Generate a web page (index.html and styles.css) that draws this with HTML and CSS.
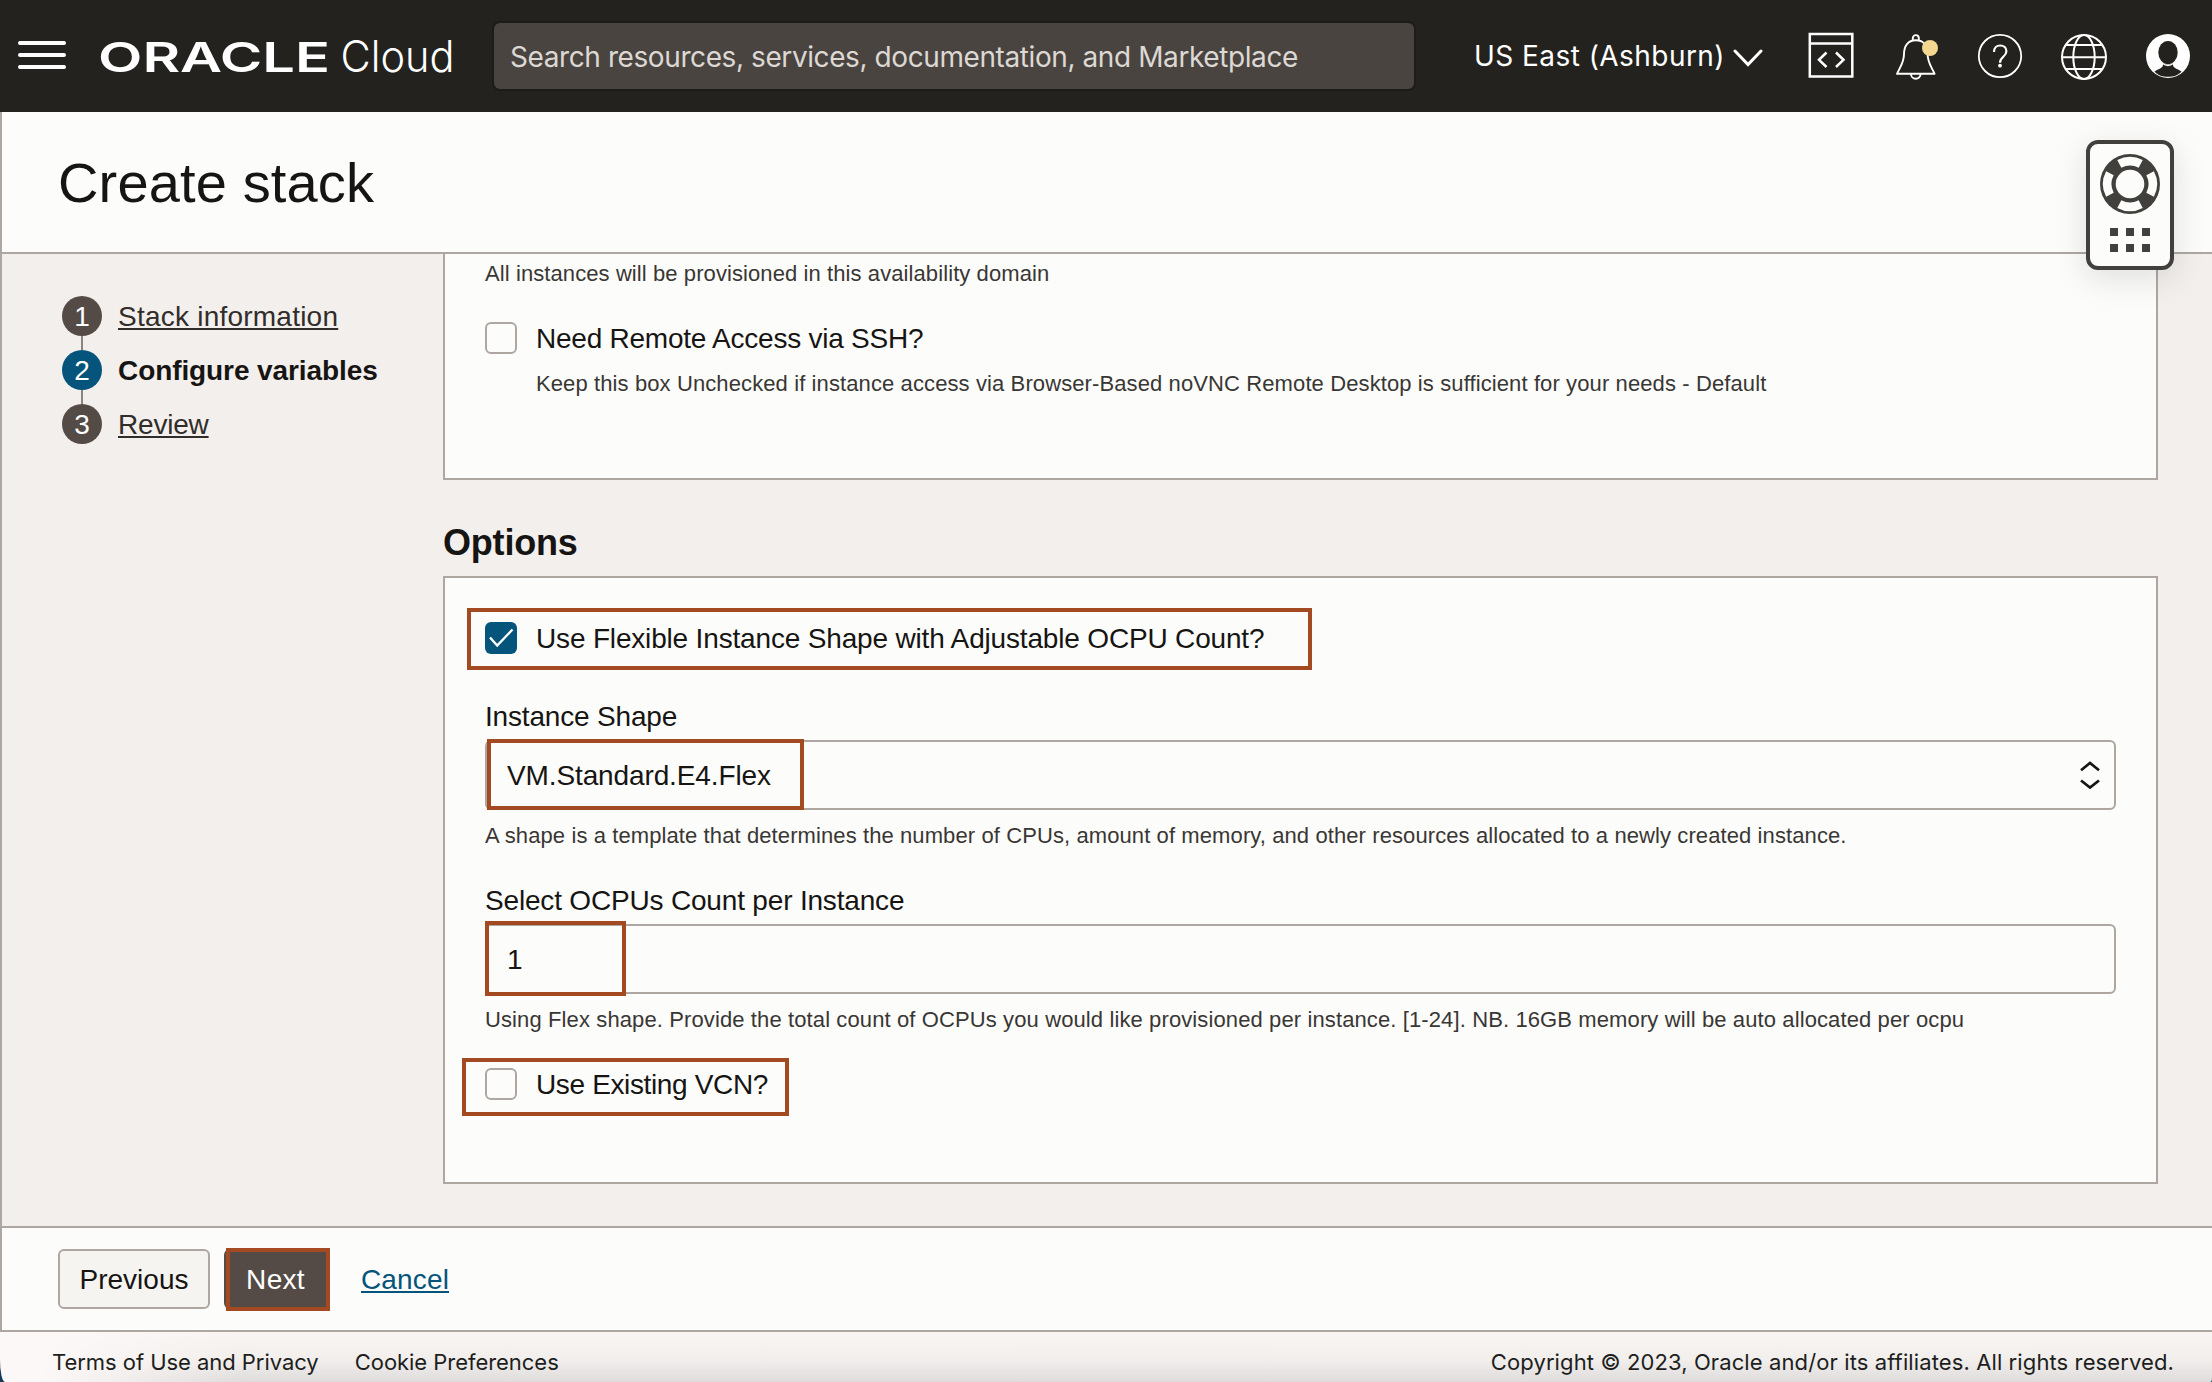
FILE: index.html
```
<!DOCTYPE html>
<html lang="en">
<head>
<meta charset="utf-8">
<title>Create stack</title>
<link rel="stylesheet" href="styles.css">
</head>
<body>
<div class="app">
  <header class="topbar">
    <button class="menu" aria-label="Menu"><span></span><span></span><span></span></button>
    <svg class="logo" width="356" height="40" viewBox="0 0 356 40" fill="#fff">
      <text class="logo-brand" x="0" y="35.500" textLength="232" lengthAdjust="spacingAndGlyphs">ORACLE</text>
      <text class="logo-product" x="242.500" y="35.500" textLength="114" lengthAdjust="spacingAndGlyphs">Cloud</text>
    </svg>
    <div class="search">Search resources, services, documentation, and Marketplace</div>
    <div class="region">US East (Ashburn)
      <svg width="30" height="18" viewBox="0 0 30 18" fill="none" stroke="#fff" stroke-width="3" stroke-linecap="round"><path d="M2 2l13 13.5L28 2"/></svg>
    </div>
    <nav class="tools">
      <svg width="48" height="48" viewBox="0 0 48 48" fill="none" stroke="#fff" stroke-width="2.5"><path d="M2.8 2h42.5v42.6H2.8zM2.8 11.4h42.5"/><path d="M19.5 20.5L12 27.8l7.5 7.2M29 20.5l7.5 7.3L29 35"/></svg>
      <svg width="48" height="48" viewBox="0 0 48 48" fill="none" stroke="#fff" stroke-width="1.9"><path d="M5 41.8h37.6c-3.7-8-7-11.500-7-19.500 0-8-3.500-14-11.800-14s-11.800 6-11.800 14c0 8-3.300 11.500-7 19.500z" stroke-linejoin="round"/><path d="M20.800 8.300V6.300a3 3.200 0 0 1 6 0v2M19 42a4.800 4.800 0 0 0 9.600 0"/><circle cx="38" cy="16" r="8" fill="#f5d78f" stroke="none"/></svg>
      <svg width="48" height="48" viewBox="0 0 48 48" fill="none" stroke="#fff" stroke-width="1.8"><circle cx="24" cy="24" r="21.200"/><path d="M18 20c0-4 2.500-6.500 6.200-6.500s6.200 2.400 6.200 5.700c0 5.600-6.400 5.600-6.400 11.600" stroke-width="2.200"/><circle cx="24" cy="33.700" r="1.900" fill="#fff" stroke="none"/></svg>
      <svg width="48" height="48" viewBox="0 0 48 48" fill="none" stroke="#fff" stroke-width="2"><circle cx="24" cy="25" r="22"/><ellipse cx="24" cy="25" rx="10.700" ry="22"/><path d="M2 25.300h44M6 13h36M6 37h36"/></svg>
      <svg width="48" height="48" viewBox="0 0 48 48"><circle cx="24" cy="24" r="22" fill="#fff"/><ellipse cx="24" cy="20.500" rx="9.700" ry="11.500" fill="#24221e"/><path d="M19 30.500v2.500c0 3-5 4-8.500 6.500 3.800 4 8 5.300 13.500 5.300s9.700-1.300 13.500-5.300C34 37 29 36 29 33v-2.500c-3 2.800-7 2.800-10 0z" fill="#24221e"/><path d="M18.800 31.600c3 2.500 7.400 2.500 10.400 0" fill="none" stroke="#fff" stroke-width="1.300"/></svg>
    </nav>
  </header>

  <div class="workspace">
    <div class="titlebar"><h1>Create stack</h1></div>
    <div class="content">
      <ol class="steps">
        <li class="step"><span class="dot">1</span><a class="step-link">Stack information</a></li>
        <li class="step current"><span class="dot">2</span><span class="step-name">Configure variables</span></li>
        <li class="step"><span class="dot">3</span><a class="step-link review">Review</a></li>
      </ol>
      <main class="form">
        <section class="panel first">
          <p class="hint">All instances will be provisioned in this availability domain</p>
          <div class="check ssh"><span class="box"></span><span class="check-label">Need Remote Access via SSH?</span></div>
          <p class="hint indented">Keep this box Unchecked if instance access via Browser-Based noVNC Remote Desktop is sufficient for your needs - Default</p>
        </section>
        <h2>Options</h2>
        <section class="panel second">
          <div class="check flexible">
            <span class="box checked"><svg width="32" height="32" viewBox="0 0 32 32" fill="none" stroke="#fff" stroke-width="2.400"><path d="M5 15.500l7.200 8L27.500 7.500"/></svg></span>
            <span class="check-label">Use Flexible Instance Shape with Adjustable OCPU Count?</span>
            <span class="mark mark-flexible"></span>
          </div>
          <div class="label shape-label">Instance Shape</div>
          <div class="field">
            <span class="value">VM.Standard.E4.Flex</span>
            <svg class="sorter" width="22" height="30" viewBox="0 0 22 30" fill="none" stroke="#161513" stroke-width="2.700"><path d="M2 10.200L11 3l9 7.200M2 20.500l9 7 9-7"/></svg>
            <span class="mark mark-shape"></span>
          </div>
          <p class="hint below shape-hint">A shape is a template that determines the number of CPUs, amount of memory, and other resources allocated to a newly created instance.</p>
          <div class="label count-label">Select OCPUs Count per Instance</div>
          <div class="field">
            <span class="value">1</span>
            <span class="mark mark-count"></span>
          </div>
          <p class="hint below count-hint">Using Flex shape. Provide the total count of OCPUs you would like provisioned per instance. [1-24]. NB. 16GB memory will be auto allocated per ocpu</p>
          <div class="check vcn">
            <span class="box"></span><span class="check-label">Use Existing VCN?</span>
            <span class="mark mark-vcn"></span>
          </div>
        </section>
      </main>
    </div>
    <div class="actions">
      <button class="btn">Previous</button>
      <button class="btn primary">Next<span class="mark mark-next"></span></button>
      <a class="cancel">Cancel</a>
    </div>
  </div>

  <footer class="footer">
    <span>Terms of Use and Privacy</span>
    <span>Cookie Preferences</span>
    <span class="copyright">Copyright © 2023, Oracle and/or its affiliates. All rights reserved.</span>
  </footer>

  <aside class="help">
    <svg width="60" height="60" viewBox="-30 -30 60 60">
      <circle r="30" fill="#41403c"/>
      <g fill="none" stroke="#fcfcfa" stroke-width="8.600">
        <path id="seg" d="M-10.700-20.100A22.800 22.800 0 0 1 10.700-20.100"/>
        <use href="#seg" transform="rotate(90)"/><use href="#seg" transform="rotate(180)"/><use href="#seg" transform="rotate(270)"/>
      </g>
      <circle r="14.300" fill="#fcfcfa"/>
    </svg>
    <div class="grid"><i></i><i></i><i></i><i></i><i></i><i></i></div>
  </aside>
</div>
</body>
</html>
```
FILE: styles.css
```
* { box-sizing: border-box; }

body {
  margin: 0;
  background: #123a5c;
  color: #161513;
  font: 28px/31px "Liberation Sans", Arial, sans-serif;
}
h1, h2, p, ol { margin: 0; padding: 0; font-weight: 400; list-style: none; }
button { font: inherit; color: inherit; padding: 0; }

.app {
  position: relative;
  width: 2212px;
  height: 1382px;
  display: flex;
  flex-direction: column;
  overflow: hidden;
}

/* Top bar */
.topbar {
  height: 112px;
  flex: none;
  display: flex;
  align-items: center;
  padding-left: 18px;
  background: #24221e;
  color: #fff;
  font-family: Inter, sans-serif;
  white-space: nowrap;
}
.menu {
  width: 48px;
  margin-top: -2px;
  display: flex;
  flex-direction: column;
  gap: 8px;
  border: 0;
  background: none;
}
.menu span { height: 4px; border-radius: 2px; background: #fff; }
.logo { margin-left: 32px; flex: none; overflow: visible; }
.logo-brand { font: 600 41px Inter, sans-serif; }
.logo-product { font: 300 43px Inter, sans-serif; }
.search {
  width: 920px;
  height: 66px;
  margin-left: 40px;
  padding: 17px 16px 0;
  border-radius: 6px;
  background: #4a4440;
  box-shadow: 0 0 0 2px #1e1c19;
  color: #dcd8d3;
  line-height: 34px;
  letter-spacing: -0.41px;
}
.region {
  margin-left: 60px;
  display: flex;
  align-items: center;
  gap: 8px;
  width: 289px;
  line-height: 34px;
  letter-spacing: 0.45px;
}
.region svg { margin-top: 3px; flex: none; }
.tools { margin-left: 44px; display: flex; gap: 36px; }
.tools svg:first-child { margin-right: 1px; }

/* Page frame */
.workspace {
  height: 1220px;
  flex: none;
  display: flex;
  flex-direction: column;
  border-left: 2px solid #aea7a1;
  border-bottom: 2px solid #aea7a1;
  background: #fcfcfa;
}
.titlebar {
  height: 142px;
  flex: none;
  padding: 39px 0 0 56px;
  border-bottom: 2px solid #aea7a1;
}
h1 { font-size: 56px; line-height: 63px; letter-spacing: 0.15px; }
.content {
  height: 972px;
  flex: none;
  display: flex;
  background: #f3efec;
}

/* Steps */
.steps { width: 441px; flex: none; padding: 42px 0 0 60px; }
.step {
  position: relative;
  height: 54px;
  display: flex;
  align-items: flex-start;
  gap: 16px;
}
.step:not(:last-child)::after {
  content: "";
  position: absolute;
  left: 19px;
  top: 40px;
  width: 2px;
  height: 14px;
  background: #8b8580;
}
.dot {
  width: 40px;
  height: 40px;
  border-radius: 50%;
  background: #544b47;
  color: #fff;
  text-align: center;
  line-height: 41px;
}
.current .dot { background: #05547c; }
.step-link, .step-name { margin-top: 5px; }
.step-link {
  color: #312d2a;
  letter-spacing: 0.23px;
  text-decoration: underline;
  text-decoration-thickness: 2px;
  text-underline-offset: 2px;
  text-decoration-skip-ink: none;
}
.step-link.review { letter-spacing: -0.2px; }
.step-name { font-weight: 700; letter-spacing: -0.09px; }

/* Form */
.form { width: 1715px; }
.panel {
  padding: 0 40px;
  border: 2px solid #aea7a1;
  background: #fcfcfa;
}
.first { height: 226px; padding-top: 7px; border-top: 0; }
.second { height: 608px; padding-top: 44px; }
h2 {
  margin: 42px 0 13px;
  font-size: 36px;
  font-weight: 700;
  line-height: 41px;
  letter-spacing: -0.2px;
}
.hint {
  color: #393734;
  font-size: 22px;
  line-height: 25px;
  letter-spacing: 0.09px;
  white-space: nowrap;
}
.hint.indented { margin: 17px 0 0 51px; letter-spacing: 0.107px; }
.hint.below { margin-top: 13px; }
.shape-hint { letter-spacing: 0.098px; }
.count-hint { letter-spacing: 0.113px; }
.check { position: relative; display: flex; gap: 19px; height: 32px; }
.box {
  width: 32px;
  height: 32px;
  border: 2px solid #aea7a1;
  border-radius: 6px;
}
.box.checked { border: 0; background: #05547c; }
.check-label { padding-top: 1px; }
.ssh { margin-top: 36px; }
.vcn { margin-top: 36px; }
.ssh .check-label { letter-spacing: -0.24px; }
.flexible .check-label { letter-spacing: -0.17px; }
.vcn .check-label { letter-spacing: -0.36px; }
.label { margin-bottom: 8px; letter-spacing: -0.18px; }
.shape-label { margin-top: 47px; }
.count-label { margin-top: 37px; }
.field {
  position: relative;
  width: 1631px;
  height: 70px;
  display: flex;
  align-items: center;
  justify-content: space-between;
  padding: 0 13px 0 20px;
  border: 2px solid #aea7a1;
  border-radius: 6px;
}
.value { letter-spacing: -0.12px; }

/* Highlight frames */
.mark { position: absolute; border: 4px solid #a44a22; }
.mark-flexible { left: -18px; top: -14px; width: 845px; height: 62px; }
.mark-shape { left: 0; top: -3px; width: 317px; height: 71px; }
.mark-count { left: -2px; top: -5px; width: 141px; height: 75px; }
.mark-vcn { left: -23px; top: -10px; width: 327px; height: 58px; }
.mark-next { left: 2px; top: -1px; width: 104px; height: 63px; }

/* Actions */
.actions {
  height: 104px;
  display: flex;
  align-items: flex-start;
  padding: 21px 0 0 56px;
  border-top: 2px solid #aea7a1;
}
.btn {
  position: relative;
  width: 152px;
  height: 60px;
  border: 2px solid #aea7a1;
  border-radius: 6px;
  background: #f5f4f1;
}
.btn.primary {
  width: 105px;
  margin-left: 14px;
  padding-right: 2px;
  border: 0;
  background: #544b47;
  color: #fff;
  letter-spacing: 0.3px;
}
.cancel {
  margin: 15px 0 0 32px;
  color: #05547c;
  letter-spacing: 0.15px;
  text-decoration: underline;
  text-decoration-thickness: 2px;
  text-underline-offset: 2px;
  text-decoration-skip-ink: none;
}

/* Footer */
.footer {
  flex: 1;
  display: flex;
  gap: 36px;
  padding: 17px 38px 0 52px;
  border-radius: 0 0 2px 5px / 0 0 4px 22px;
  background:
    linear-gradient(90deg, #fcf8f7 40px, rgba(252, 248, 247, 0) 240px),
    linear-gradient(#f9f5f3, #f1eeec 55%, #dfdddc);
  color: #201e1c;
  font: 22px/26px Inter, sans-serif;
  letter-spacing: -0.04px;
}
.copyright { margin-left: auto; letter-spacing: 0.11px; }

/* Floating help widget */
.help {
  position: absolute;
  left: 2086px;
  top: 140px;
  width: 88px;
  height: 130px;
  padding-top: 10px;
  display: flex;
  flex-direction: column;
  align-items: center;
  gap: 14px;
  border: 4px solid #41403c;
  border-radius: 12px;
  background: #fcfcfa;
  box-shadow: 0 8px 32px rgba(22, 30, 40, 0.13);
}
.grid { display: grid; grid-template-columns: repeat(3, 8px); gap: 8px; }
.grid i { height: 8px; background: #41403c; }
```
